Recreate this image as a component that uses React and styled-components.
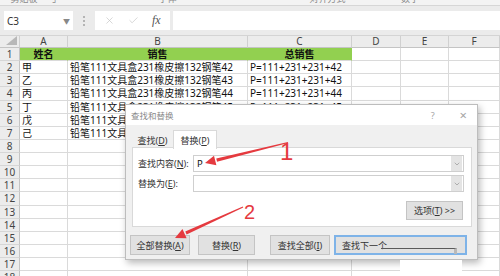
import React from "react";
import styled, { createGlobalStyle } from "styled-components";
import { X, Check, ChevronDown } from "lucide-react";

const GlobalStyle = createGlobalStyle`
  html, body {
    margin: 0;
    padding: 0;
    background: #fff;
  }
  body {
    font-family: "Noto Sans", "Noto Sans CJK SC", sans-serif;
    overflow: hidden;
  }
`;

const Screen = styled.div`
  position: relative;
  width: 500px;
  height: 276px;
  overflow: hidden;
  background: #fff;
`;

const Ribbon = styled.div`
  height: 5px;
  overflow: hidden;
  background: #f3f3f3;
  border-bottom: 1px solid #d6d6d6;
  display: flex;
  font-size: 9px;
  line-height: 10px;
  color: #8a8a8a;
`;

const RibbonLabel = styled.span`
  margin-top: -6px;
  width: ${(p) => p.$w}px;
  text-align: center;
  flex: none;
`;

const FormulaBar = styled.div`
  height: 30px;
  box-sizing: border-box;
  background: #ebebeb;
  border-bottom: 1px solid #d4d4d4;
  display: flex;
  align-items: center;
  padding-left: 4px;
`;

const NameBox = styled.div`
  width: 69px;
  height: 19px;
  background: #fff;
  display: flex;
  align-items: center;
  justify-content: space-between;
  padding: 0 3px;
  box-sizing: border-box;
  font-size: 10px;
  color: #333;
`;

const Caret = styled.span`
  font-size: 7px;
  color: #888;
`;

const Grip = styled.div`
  width: 22px;
  display: flex;
  justify-content: center;
  &::before {
    content: "";
    height: 10px;
    border-left: 2px dotted #b4b4b4;
  }
`;

const FxButtons = styled.div`
  width: 75px;
  height: 19px;
  background: #fff;
  display: flex;
  align-items: center;
  justify-content: space-around;
  padding: 0 3px;
  box-sizing: border-box;
  color: #c2c2c2;
`;

const FxGlyph = styled.span`
  font-family: "Liberation Serif", serif;
  font-style: italic;
  font-size: 12px;
  color: #555;
`;

const FormulaInput = styled.div`
  flex: 1;
  height: 19px;
  margin-left: 3px;
  background: #fff;
`;

const Sheet = styled.div`
  display: grid;
  grid-template-columns: 20px 48px 180px 104px 49px 48px 51px;
  grid-template-rows: 12px;
  grid-auto-rows: 13.13px;
`;

const HeadCell = styled.div`
  box-sizing: border-box;
  background: #ececec;
  border-right: 1px solid #d0d0d0;
  border-bottom: 1px solid #c4c4c4;
  font-size: 10px;
  line-height: 11px;
  text-align: center;
  color: #444;
  overflow: hidden;
`;

const Corner = styled(HeadCell)`
  position: relative;
  &::after {
    content: "";
    position: absolute;
    right: 2px;
    bottom: 2px;
    border-left: 11px solid transparent;
    border-bottom: 9px solid #b8b8b8;
  }
`;

const RowHead = styled(HeadCell)`
  border-right: 1px solid #c4c4c4;
  border-bottom: 1px solid #d6d6d6;
  line-height: 12px;
`;

const Cell = styled.div`
  box-sizing: border-box;
  background: ${(p) => (p.$green ? "#92d050" : "#fff")};
  border-right: 1px solid ${(p) => (p.$green ? "#92d050" : "#dadada")};
  border-bottom: 1px solid #dadada;
  font-size: 10px;
  line-height: 12px;
  padding: 0 2px;
  white-space: nowrap;
  overflow: hidden;
  text-align: ${(p) => (p.$center ? "center" : "left")};
  font-weight: ${(p) => (p.$bold ? 700 : 400)};
  color: #111;
`;

const Dialog = styled.div`
  position: absolute;
  left: 125px;
  top: 104px;
  width: 353px;
  height: 156px;
  box-sizing: border-box;
  border: 1px solid #bdbdbd;
  background: #f0f0f0;
  box-shadow: 2px 3px 7px rgba(0, 0, 0, 0.28);
  display: flex;
  flex-direction: column;
  font-size: 9px;
  color: #222;
`;

const TitleBar = styled.div`
  height: 21px;
  background: #fff;
  display: flex;
  align-items: center;
  padding: 0 10px 0 5px;
`;

const Title = styled.span`
  flex: 1;
  font-size: 8.5px;
  color: #8a8a8a;
`;

const TitleButton = styled.span`
  color: #a5a5a5;
  font-size: ${(p) => p.$size || 9}px;
  margin-left: ${(p) => p.$gap || 0}px;
`;

const Body = styled.div`
  flex: 1;
  display: flex;
  flex-direction: column;
  padding: 5px 5px 4px 5px;
`;

const Tabs = styled.div`
  display: flex;
  padding-left: 1px;
  height: 18px;
  margin-bottom: -1px;
  position: relative;
`;

const Tab = styled.div`
  box-sizing: border-box;
  width: ${(p) => p.$w}px;
  height: 19px;
  display: flex;
  align-items: center;
  justify-content: center;
  background: ${(p) => (p.$active ? "#fff" : "transparent")};
  border: 1px solid ${(p) => (p.$active ? "#d9d9d9" : "transparent")};
  border-bottom: none;
  color: #333;
`;

const Panel = styled.div`
  box-sizing: border-box;
  height: 80px;
  margin-left: 1px;
  background: #fff;
  border: 1px solid #d9d9d9;
  display: flex;
  flex-direction: column;
  gap: 3px;
  padding: 7px 7px 0 5px;
`;

const FieldRow = styled.div`
  display: flex;
  align-items: center;
`;

const Label = styled.span`
  width: 55px;
  flex: none;
  color: #333;
`;

const Combo = styled.div`
  flex: 1;
  height: 17px;
  box-sizing: border-box;
  border: 1px solid #cfcfcf;
  display: flex;
  align-items: center;
  padding-left: 3px;
`;

const ComboText = styled.span`
  flex: 1;
  font-size: 9.5px;
  color: #111;
`;

const ComboButton = styled.span`
  width: 11px;
  height: 15px;
  margin-right: 1px;
  background: #e4e4e4;
  display: flex;
  align-items: center;
  justify-content: center;
  color: #777;
`;

const OptionsRow = styled.div`
  display: flex;
  justify-content: flex-end;
  padding: 6px 1px 0 0;
`;

const Button = styled.div`
  position: relative;
  box-sizing: border-box;
  width: ${(p) => p.$w}px;
  height: ${(p) => p.$h || 20}px;
  margin-left: ${(p) => p.$gap || 0}px;
  background: #e1e1e1;
  border: ${(p) => (p.$focus ? "2px solid #7eb3e8" : "1px solid #c4c4c4")};
  display: flex;
  align-items: center;
  justify-content: ${(p) => (p.$focus ? "flex-start" : "center")};
  padding-left: ${(p) => (p.$focus ? 6 : 0)}px;
  color: #333;
  white-space: nowrap;
`;

const FocusMark = styled.span`
  position: absolute;
  left: 45px;
  right: 8px;
  top: 11px;
  bottom: -1px;
  border-top: 1px solid #5a5a5a;
  border-right: 3px solid #b9b9b9;
`;

const ButtonRow = styled.div`
  display: flex;
  margin-top: 8px;
  padding-left: -1px;
`;

const Smudge = styled.div`
  position: absolute;
  left: 400px;
  top: 260px;
  width: 62px;
  height: 16px;
  background: #fff;
`;

const Overlay = styled.svg`
  position: absolute;
  left: 0;
  top: 0;
  pointer-events: none;
`;

const Mark = styled.span`
  position: absolute;
  left: ${(p) => p.$x}px;
  top: ${(p) => p.$y}px;
  font-family: "Liberation Sans", sans-serif;
  font-size: ${(p) => p.$size}px;
  line-height: 1;
  color: #e53a3f;
  pointer-events: none;
`;

const cols = ["A", "B", "C", "D", "E", "F"];
const names = ["甲", "乙", "丙", "丁", "戊", "己"];
const data = names.map((n, i) => [
  n,
  `铅笔111文具盒231橡皮擦132钢笔${42 + i}`,
  `P=111+231+231+${42 + i}`,
]);

function arrow(tail, tip) {
  const dx = tip[0] - tail[0];
  const dy = tip[1] - tail[1];
  const len = Math.hypot(dx, dy);
  const ux = dx / len;
  const uy = dy / len;
  const px = -uy;
  const py = ux;
  const bx = tip[0] - ux * 12;
  const by = tip[1] - uy * 12;
  const pt = (x, y) => `${x.toFixed(2)},${y.toFixed(2)}`;
  const shaft = [
    pt(tail[0] + px * 0.6, tail[1] + py * 0.6),
    pt(bx + px * 1.6, by + py * 1.6),
    pt(bx - px * 1.6, by - py * 1.6),
    pt(tail[0] - px * 0.6, tail[1] - py * 0.6),
  ].join(" ");
  const head = [
    pt(tip[0], tip[1]),
    pt(bx + px * 5 + ux * 1.5, by + py * 5 + uy * 1.5),
    pt(bx - px * 5 + ux * 1.5, by - py * 5 + uy * 1.5),
  ].join(" ");
  return { shaft, head };
}

const arrowOne = arrow([288, 142.5], [205, 163]);
const arrowTwo = arrow([243, 207], [175, 238]);

export default function App() {
  const emptyRows = Array.from({ length: 11 }, (_, i) => i + 8);
  return (
    <>
      <GlobalStyle />
      <Screen>
        <Ribbon>
          <RibbonLabel $w={48}>剪贴板</RibbonLabel>
          <RibbonLabel $w={12}>⌟</RibbonLabel>
          <RibbonLabel $w={215}>字体</RibbonLabel>
          <RibbonLabel $w={105}>对齐方式</RibbonLabel>
          <RibbonLabel $w={60}>数字</RibbonLabel>
        </Ribbon>
        <FormulaBar>
          <NameBox>
            C3
            <Caret>▼</Caret>
          </NameBox>
          <Grip />
          <FxButtons>
            <X size={11} strokeWidth={1.4} />
            <Check size={11} strokeWidth={1.4} />
            <FxGlyph>fx</FxGlyph>
          </FxButtons>
          <FormulaInput />
        </FormulaBar>
        <Sheet>
          <Corner />
          {cols.map((c) => (
            <HeadCell key={c}>{c}</HeadCell>
          ))}
          <RowHead>1</RowHead>
          <Cell $green $bold $center>姓名</Cell>
          <Cell $green $bold $center>销售</Cell>
          <Cell $green $bold $center>总销售</Cell>
          <Cell />
          <Cell />
          <Cell />
          {data.map((row, i) => (
            <React.Fragment key={i}>
              <RowHead>{i + 2}</RowHead>
              {row.map((v, j) => (
                <Cell key={j}>{v}</Cell>
              ))}
              <Cell />
              <Cell />
              <Cell />
            </React.Fragment>
          ))}
          {emptyRows.map((r) => (
            <React.Fragment key={r}>
              <RowHead>{r}</RowHead>
              {cols.map((c) => (
                <Cell key={c} />
              ))}
            </React.Fragment>
          ))}
        </Sheet>

        <Dialog>
          <TitleBar>
            <Title>查找和替换</Title>
            <TitleButton>?</TitleButton>
            <TitleButton $size={13} $gap={25}>×</TitleButton>
          </TitleBar>
          <Body>
            <Tabs>
              <Tab $w={41}>查找(<u>D</u>)</Tab>
              <Tab $w={44} $active>替换(<u>P</u>)</Tab>
            </Tabs>
            <Panel>
              <FieldRow>
                <Label>查找内容(<u>N</u>):</Label>
                <Combo>
                  <ComboText>P</ComboText>
                  <ComboButton>
                    <ChevronDown size={8} strokeWidth={1.5} />
                  </ComboButton>
                </Combo>
              </FieldRow>
              <FieldRow>
                <Label>替换为(<u>E</u>):</Label>
                <Combo>
                  <ComboText />
                  <ComboButton>
                    <ChevronDown size={8} strokeWidth={1.5} />
                  </ComboButton>
                </Combo>
              </FieldRow>
              <OptionsRow>
                <Button $w={57} $h={19}>选项(<u>T</u>) &gt;&gt;</Button>
              </OptionsRow>
            </Panel>
            <ButtonRow>
              <Button $w={60} $gap={-1}>全部替换(<u>A</u>)</Button>
              <Button $w={57} $gap={8}>替换(<u>R</u>)</Button>
              <Button $w={60} $gap={15}>查找全部(<u>I</u>)</Button>
              <Button $w={133} $gap={4} $focus>
                查找下一个
                <FocusMark />
              </Button>
            </ButtonRow>
          </Body>
        </Dialog>

        <Smudge />

        <Overlay width="500" height="276" viewBox="0 0 500 276">
          <polygon points={arrowOne.shaft} fill="#e53a3f" />
          <polygon points={arrowOne.head} fill="#e53a3f" />
          <polygon points={arrowTwo.shaft} fill="#e53a3f" />
          <polygon points={arrowTwo.head} fill="#e53a3f" />
        </Overlay>
        <Mark $x={280} $y={140} $size={24}>1</Mark>
        <Mark $x={244} $y={202} $size={20}>2</Mark>
      </Screen>
    </>
  );
}
